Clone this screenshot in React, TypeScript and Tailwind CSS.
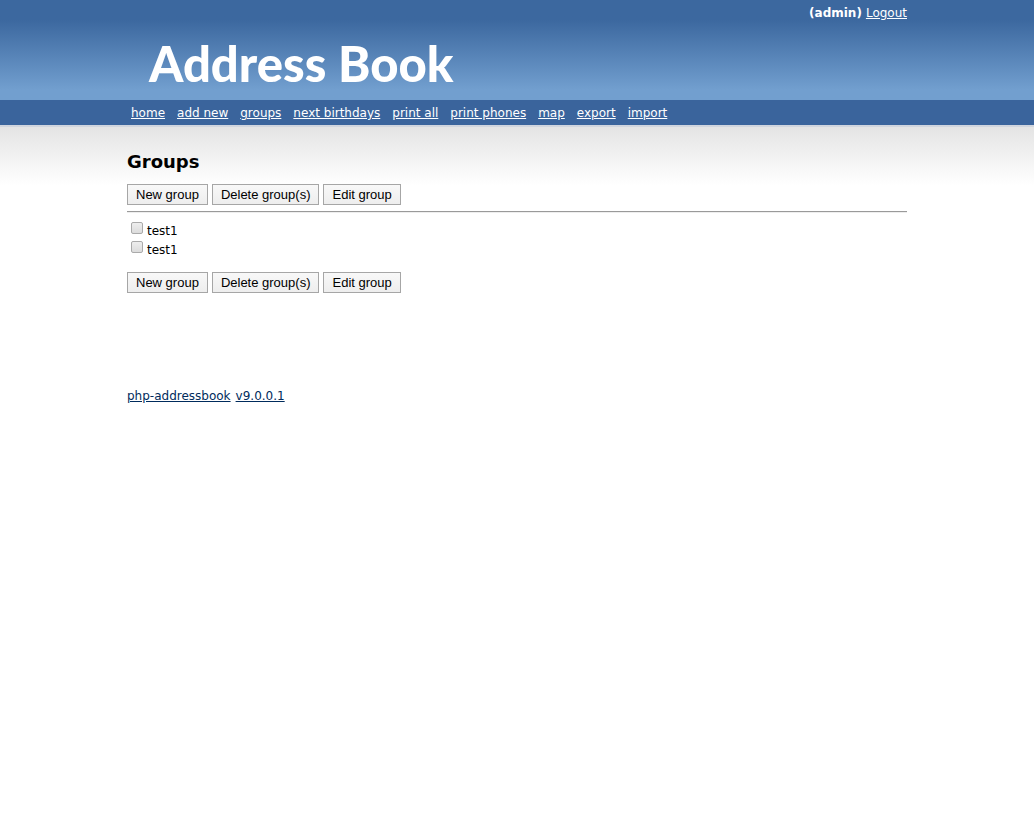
const navItems = [
  'home',
  'add new',
  'groups',
  'next birthdays',
  'print all',
  'print phones',
  'map',
  'export',
  'import',
];

const groups = [
  { id: 1, name: 'test1' },
  { id: 2, name: 'test1' },
];

function GroupActions() {
  const button =
    'h-[21px] border border-[#a6a6a6] bg-linear-to-b from-[#f8f8f8] to-[#eeeeee] px-2 font-[Liberation_Sans,Arial,sans-serif] text-[13px] leading-none whitespace-nowrap text-black';
  return (
    <div className="flex flex-wrap gap-1">
      <button type="button" className={button}>New group</button>
      <button type="button" className={button}>Delete group(s)</button>
      <button type="button" className={button}>Edit group</button>
    </div>
  );
}

export default function App() {
  return (
    <div className="min-h-screen bg-white font-[DejaVu_Sans,Verdana,sans-serif] text-xs text-black">
      <header className="bg-linear-to-b from-[#3c689f] from-20% to-[#729fcf] to-90% text-white">
        <div className="mx-auto h-[100px] max-w-[780px]">
          <p className="flex justify-end gap-1 pt-[5px] leading-4">
            <b>(admin)</b>
            <a href="#logout" className="underline">Logout</a>
          </p>
          <div className="pt-3 pl-[22px] font-[Lato,sans-serif] text-[49px] leading-[60px] font-black whitespace-nowrap">
            Address Book
          </div>
        </div>
      </header>
      <nav className="border-b-2 border-[#d0d5de] bg-[#3a649c] text-white">
        <ul className="mx-auto flex max-w-[780px] flex-wrap gap-x-3 px-1 pt-[2px] leading-[23px]">
          {navItems.map((item) => (
            <li key={item}>
              <a href="#top" className="underline">{item}</a>
            </li>
          ))}
        </ul>
      </nav>
      <div className="bg-linear-to-b from-[#e4e4e4] to-white to-[58px]">
        <main className="mx-auto max-w-[780px] pt-[23px]">
          <h1 className="text-lg leading-6 font-bold">Groups</h1>
          <form className="pt-[10px]" onSubmit={(e) => e.preventDefault()}>
            <GroupActions />
            <hr className="mt-[6px] border-t border-b border-t-[#9a9a9a] border-b-[#eeeeee]" />
            <div className="pt-2 pb-[13px]">
              {groups.map((group) => (
                <label key={group.id} className="flex h-[19px] w-fit items-start gap-1 pl-1 leading-[21px]">
                  <input
                    type="checkbox"
                    className="mt-px size-3 appearance-none rounded-[2px] border border-[#aaaaaa] bg-linear-to-b from-[#eeeeee] to-[#dcdcdc] checked:bg-[#3a649c]"
                  />
                  {group.name}
                </label>
              ))}
            </div>
            <GroupActions />
          </form>
        </main>
      </div>
      <footer className="mx-auto flex max-w-[780px] gap-[5px] pt-[95px] leading-4 text-[#002b5c]">
        <a href="#project" className="underline">php-addressbook</a>
        <a href="#version" className="underline">v9.0.0.1</a>
      </footer>
    </div>
  );
}
